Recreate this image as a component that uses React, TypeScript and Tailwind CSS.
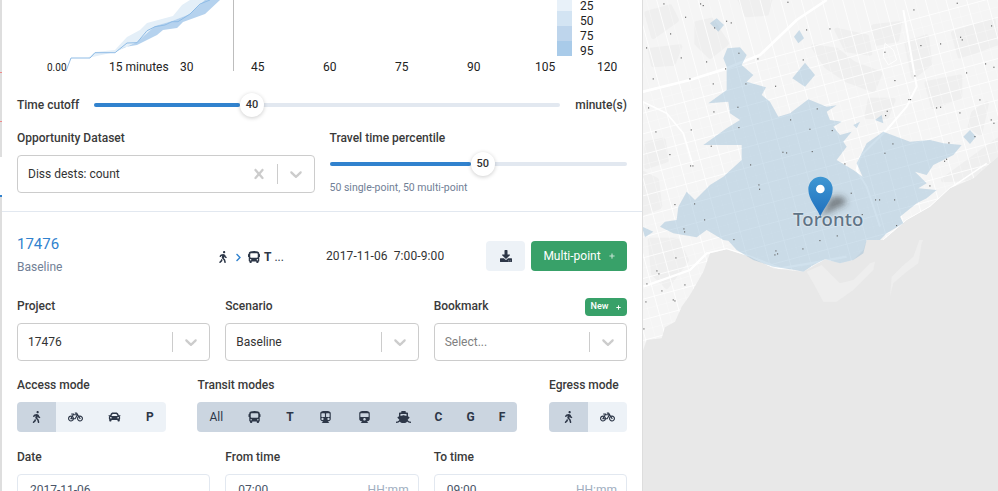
import React from 'react'
import {
  FaBicycle,
  FaBus,
  FaCar,
  FaChevronRight,
  FaDownload,
  FaPlus,
  FaShip,
  FaSubway,
  FaTrain,
  FaWalking,
} from 'react-icons/fa'

const chevronPath =
  'M4.516 7.548c0.436-0.446 1.043-0.481 1.576 0l3.908 3.747 3.908-3.747c0.533-0.481 1.141-0.446 1.574 0 0.436 0.445 0.408 1.197 0 1.615-0.406 0.418-4.695 4.502-4.695 4.502-0.217 0.223-0.502 0.335-0.787 0.335s-0.57-0.112-0.789-0.335c0 0-4.287-4.084-4.695-4.502s-0.436-1.17 0-1.615z'
const clearPath =
  'M14.348 14.849c-0.469 0.469-1.229 0.469-1.697 0l-2.651-3.030-2.651 3.029c-0.469 0.469-1.229 0.469-1.697 0-0.469-0.469-0.469-1.229 0-1.697l2.758-3.15-2.759-3.152c-0.469-0.469-0.469-1.228 0-1.697s1.228-0.469 1.697 0l2.652 3.031 2.651-3.031c0.469-0.469 1.228-0.469 1.697 0s0.469 1.229 0 1.697l-2.758 3.152 2.758 3.15c0.469 0.469 0.469 1.229 0 1.698z'

const Label: React.FC<{ children: React.ReactNode; className?: string }> = ({ children, className = '' }) => (
  <div className={`h-4 text-xs leading-4 font-medium text-[#3a3a3a] ${className}`}>{children}</div>
)

const Select: React.FC<{ value: string; placeholder?: boolean; clearable?: boolean }> = ({
  value,
  placeholder,
  clearable,
}) => (
  <div className="flex h-[38px] items-center rounded border border-[#ccc] bg-white pl-[10px]">
    <div className={`flex-1 text-xs ${placeholder ? 'text-[#808080]' : 'text-[#333]'}`}>{value}</div>
    {clearable && (
      <svg viewBox="0 0 20 20" className="mr-2 h-5 w-5 fill-[#ccc]">
        <path d={clearPath} />
      </svg>
    )}
    <div className="h-[20px] w-px bg-[#ccc]" />
    <svg viewBox="0 0 20 20" className="mx-2 h-5 w-5 fill-[#ccc]">
      <path d={chevronPath} />
    </svg>
  </div>
)

const Slider: React.FC<{ percent: string; value: number; className?: string }> = ({ percent, value, className = '' }) => (
  <div className={`relative h-6 ${className}`}>
    <div className="absolute top-[10px] h-1 w-full rounded-full bg-[#e2e8f0]" />
    <div className="absolute top-[10px] left-0 h-1 rounded-full bg-[#3182ce]" style={{ width: percent }} />
    <div
      className="absolute top-0 flex h-6 w-6 -translate-x-1/2 items-center justify-center rounded-full bg-white text-[11px] font-medium text-[#333] shadow-[0_1px_4px_rgba(0,0,0,0.2)]"
      style={{ left: `calc(${percent} + 12px)` }}
    >
      {value}
    </div>
  </div>
)

type Mode = { key: string; icon?: React.ReactNode; text?: string; bold?: boolean; active?: boolean }

const ModeGroup: React.FC<{ modes: Mode[] }> = ({ modes }) => (
  <div className="flex h-[30px] overflow-hidden rounded text-[#2d3748]">
    {modes.map((m) => (
      <div
        key={m.key}
        className={`flex items-center justify-center px-3 text-xs ${m.bold ? 'font-bold' : ''} ${
          m.active ? 'bg-[#cbd5e0]' : 'bg-[#edf2f7]'
        }`}
      >
        {m.icon ?? m.text}
      </div>
    ))}
  </div>
)

const TimeInput: React.FC<{ value: string; hint?: string }> = ({ value, hint }) => (
  <div className="flex h-[34px] items-center justify-between rounded border border-[#e2e8f0] bg-white pr-[9px] pb-[3px] pl-3 text-xs text-[#4a5568]">
    <span>{value}</span>
    {hint && <span className="text-[#a0aec0]">{hint}</span>}
  </div>
)

const Chart: React.FC = () => (
  <svg viewBox="0 0 640 73" className="block h-[73px] w-[640px]">
    <g transform="translate(-2 0)">
      <polygon
        points="88,58 95,52 115,50 127,37 140,30 147,23 173,16 182,5 190,0 215,0 190,14 172,21 155,26 137,42 115,52"
        fill="#e4eff8"
      />
      <polygon
        points="115,52 125,47 137,45 157,35 163,30 177,28 183,22 205,14 220,0 205,0 190,14 172,21 155,26 137,42"
        fill="#b5d2ee"
      />
      <polyline
        points="66,71 71,58 90,58 95,52.7 115,52.7 127,43 137,42.7 147,30.7 155,26.7 165,25 172,21.7 178,21.7 190,14 200,4 210,0"
        fill="none"
        stroke="#8fbce6"
        strokeWidth="1"
      />
    </g>
    <line x1="231.5" y1="0" x2="231.5" y2="71" stroke="#bdbdbd" strokeWidth="1" />
    <rect x="555" y="-4" width="15" height="15" fill="#e8f1f9" />
    <rect x="555" y="11" width="15" height="15" fill="#d3e4f3" />
    <rect x="555" y="26" width="15" height="15" fill="#bed5ec" />
    <rect x="555" y="41" width="15" height="15" fill="#a9cbe9" />
    <g fontSize="12" fill="#222" fontFamily="Roboto, sans-serif">
      <text x="578" y="10">25</text>
      <text x="578" y="25">50</text>
      <text x="578" y="40">75</text>
      <text x="578" y="55">95</text>
      <text x="45" y="71" fontSize="10">0.00</text>
      <text x="107" y="71">15 minutes</text>
      <text x="178" y="71">30</text>
      <text x="249" y="71">45</text>
      <text x="321" y="71">60</text>
      <text x="393" y="71">75</text>
      <text x="465" y="71">90</text>
      <text x="533" y="71">105</text>
      <text x="595" y="71">120</text>
    </g>
  </svg>
)

const land =
  '6,0 1074,0 1074,470 1050,490 1000,535 930,565 870,620 800,660 730,720 680,720 670,750 640,780 600,790 555,778 520,798 490,815 400,805 330,770 260,748 210,760 190,815 150,885 125,920 105,965 75,982 65,1015 20,1020 6,1060'

const iso =
  '250,175 262,145 300,142 320,165 305,195 340,225 320,245 378,262 365,285 390,305 415,350 450,340 505,298 560,320 590,316 560,335 570,360 605,365 580,380 600,405 635,395 610,425 620,440 590,480 640,510 668,530 650,490 680,430 730,395 810,425 870,420 910,430 965,435 940,465 880,495 860,525 825,515 860,550 835,565 890,570 860,595 830,610 780,650 790,670 740,700 720,720 680,720 670,760 640,780 600,790 555,778 520,795 490,815 465,810 400,800 340,780 290,750 265,722 250,720 200,690 170,712 100,700 60,680 75,665 110,660 115,620 140,575 165,600 210,555 250,530 305,480 305,435 190,435 260,385 300,360 270,340 265,305 205,310 260,270 260,200'

const blobs = [
  '210,70 230,55 252,75 235,95',
  '462,110 478,90 492,115 475,130',
  '457,235 495,188 525,225 495,260',
  '970,410 990,390 1008,410 990,432',
  '6,680 40,695 15,712',
  '640,375 660,365 650,385',
  '705,360 725,345 730,370',
]

const parks = [
  '170,70 215,60 260,130 210,170 170,130',
  '20,40 90,20 110,60 40,110',
  '300,0 390,0 380,40 320,45',
  '520,140 590,150 640,190 720,220 700,270 620,240 560,200',
  '590,90 680,110 690,160 620,150',
  '700,80 780,70 770,120 710,130',
  '30,150 120,140 100,190 40,195',
  '800,130 860,110 870,190 820,230',
  '860,250 960,230 960,290 880,320',
  '1000,340 1040,310 1020,400 990,380',
  '20,430 70,420 80,480 20,500',
  '10,520 50,540 60,620 10,640',
  '690,300 760,300 740,350 680,350',
  '940,100 1060,60 1070,130 960,170',
  '910,540 1074,420 1074,470 1000,535',
  '30,720 110,720 140,780 80,860 40,820',
]

const dots: [number, number][] = [
  [70, 10], [180, 10], [188, 15], [442, 5], [135, 50], [258, 62], [272, 67], [222, 82], [90, 100], [498, 88], [568, 85],
  [820, 28], [950, 8], [1053, 76], [960, 110], [965, 118], [841, 135], [900, 130], [733, 155], [295, 158], [18, 142],
  [122, 172], [198, 184], [352, 175], [488, 178], [255, 205], [38, 235], [148, 235], [218, 250], [316, 250], [405, 257],
  [823, 226], [763, 240], [978, 217], [1035, 190], [1060, 200], [805, 297], [810, 297], [740, 332], [735, 345], [1018, 298],
  [888, 322], [900, 320], [958, 337], [1052, 358], [1060, 368], [24, 322], [220, 334], [292, 320], [530, 325], [450, 358],
  [508, 386], [575, 390], [295, 381], [152, 388], [46, 394], [88, 462], [150, 496], [157, 496], [212, 437], [427, 455],
  [438, 457], [515, 453], [330, 493], [613, 490], [733, 458], [757, 430], [925, 427], [912, 482], [918, 476], [1003, 408],
  [868, 556], [355, 553], [357, 566], [632, 578], [705, 598], [717, 598], [762, 598], [103, 612], [162, 610], [192, 658],
  [130, 685], [132, 694], [768, 675], [280, 717], [538, 720], [590, 706], [665, 642], [106, 772], [49, 811], [55, 820],
  [19, 850], [133, 853], [64, 871], [16, 904], [98, 898], [103, 901], [10, 985], [406, 751], [403, 763], [411, 760], [487, 745],
]

const hGrid = Array.from({ length: 22 }, (_, i) => -20 + i * 62)
const vGrid = Array.from({ length: 22 }, (_, i) => -260 + i * 62)

const MapPane: React.FC = () => (
  <div className="relative h-full flex-1 overflow-hidden bg-[#e8e8e8]">
    <svg viewBox="9 0 1065 1473" className="block h-[491px] w-[355px]">
      <defs>
        <clipPath id="land-clip">
          <polygon points={land} />
        </clipPath>
        <filter id="pin-shadow" x="-50%" y="-50%" width="200%" height="200%">
          <feGaussianBlur stdDeviation="10" />
        </filter>
        <linearGradient id="pin-fill" x1="0" y1="0" x2="0" y2="1">
          <stop offset="0" stopColor="#3f97d3" />
          <stop offset="1" stopColor="#1f6fbd" />
        </linearGradient>
      </defs>
      <polygon
        points="500,815 545,795 580,830 600,850 640,840 690,790 705,785 700,810 640,870 590,905 550,905 520,850"
        fill="#eeeeee"
      />
      <polygon points="750,890 760,850 800,815 835,790 845,730 850,720 838,720 820,770 785,800 755,830" fill="#eeeeee" />
      <polygon points={land} fill="#f5f5f5" />
      <g clipPath="url(#land-clip)">
        <g fill="#efefef" stroke="#efefef" strokeWidth="14" strokeLinejoin="round">
          {parks.map((p) => (
            <polygon key={p} points={p} />
          ))}
        </g>
        <g stroke="#fff" strokeWidth="1.5" fill="none" opacity="0.55">
          {hGrid.map((y) => (
            <line key={y} x1="0" y1={y + 331} x2="1080" y2={y + 331 - 292} />
          ))}
          {vGrid.map((x) => (
            <line key={x} x1={x + 31} y1="0" x2={x + 431} y2="1473" />
          ))}
        </g>
        <g stroke="#fff" strokeWidth="2.4" fill="none">
          {hGrid.map((y) => (
            <line key={y} x1="0" y1={y + 300} x2="1080" y2={y + 300 - 292} />
          ))}
          {vGrid.map((x) => (
            <line key={x} x1={x} y1="0" x2={x + 400} y2="1473" />
          ))}
        </g>
        <g stroke="#fff" fill="none" strokeLinejoin="round">
          <polyline points="8,275 150,240 260,205 360,165 470,60 560,0" strokeWidth="8" />
          <polyline points="790,30 830,260 800,320 740,390 660,470 650,510 680,560 720,680" strokeWidth="6" />
          <polyline points="8,305 80,340 130,400 160,500" strokeWidth="5" />
          <polyline points="10,860 150,810 200,760 260,748 330,770 420,805 510,790 620,770" strokeWidth="7" />
          <polyline points="730,720 800,660 870,620 930,565 1040,490" strokeWidth="4" />
          <polyline points="735,130 760,150 770,180 745,195 730,170 735,130" strokeWidth="3" />
        </g>
      </g>
      <g fill="#8ab4d2" fillOpacity="0.4">
        <polygon points={iso} />
        {blobs.map((b) => (
          <polygon key={b} points={b} />
        ))}
      </g>
      <g fill="#666">
        {dots.map(([x, y]) => (
          <rect key={`${x}-${y}`} x={x} y={y} width="3.5" height="3.5" />
        ))}
      </g>
      <polygon points="541,650 575,590 610,590 620,610" fill="#333" fillOpacity="0.55" filter="url(#pin-shadow)" />
      <path
        d="M541 650 C530 620 505 600 505 567 A36 36 0 0 1 578 567 C578 600 552 620 541 650 Z"
        fill="url(#pin-fill)"
      />
      <circle cx="541" cy="567" r="13" fill="#fff" />
    </svg>
    <span className="absolute top-[205px] left-[150px] font-['Noto_Sans',sans-serif] text-[18.5px] leading-7 font-medium tracking-[0.2px] text-[#5f7486] [text-shadow:0_0_2px_#fff]">
      Toronto
    </span>
  </div>
)

const iconClass = 'h-3 w-[15px]'

const App: React.FC = () => (
  <div className="flex h-[491px] w-[998px] overflow-hidden bg-white font-['Roboto',sans-serif]">
    <div className="flex w-[2px] flex-col bg-[#dedede]">
      <div className="mt-[72px] h-px bg-[#f08a8a]" />
      <div className="mt-[48px] h-px bg-[#f08a8a]" />
      <div className="mt-[35px] h-[38px] bg-white" />
      <div className="h-[2px] bg-[#3182ce]" />
    </div>
    <div className="w-[641px] shrink-0 border-r border-[#ddd]">
      <Chart />
      <div className="mt-5 flex h-6 items-center pr-[15px] pl-[15px] text-xs text-[#3a3a3a]">
        <div className="w-[77px] font-medium">Time cutoff</div>
        <Slider percent="31.33%" value={40} className="flex-1" />
        <div className="ml-[15px] font-medium">minute(s)</div>
      </div>
      <div className="mt-[13px] grid grid-cols-2 gap-x-[15px] border-b border-[#e2e8f0] px-[15px] pb-[18px]">
        <div>
          <Label className="mb-[9px]">Opportunity Dataset</Label>
          <Select value="Diss dests: count" clearable />
        </div>
        <div className="h-[63px]">
          <Label className="mb-[6px]">Travel time percentile</Label>
          <Slider percent="47.5%" value={50} />
          <div className="mt-[4px] text-[10.5px] leading-4 text-[#718096]">50 single-point, 50 multi-point</div>
        </div>
      </div>
      <div className="px-[15px] pt-[22px]">
        <div className="flex h-10 items-start">
          <div className="w-[199px]">
            <div className="text-[15px] leading-5 text-[#3182ce]">17476</div>
            <div className="mt-[5px] text-xs leading-4 text-[#718096]">Baseline</div>
          </div>
          <div className="mt-[15px] flex w-[110px] items-center text-xs text-[#2d3748]">
            <FaWalking className="ml-[1px] text-xs" />
            <FaChevronRight className="ml-[5px] text-[9px] text-[#3182ce]" />
            <FaBus className="ml-[5px] text-xs" />
            <span className="ml-[4px] font-bold">T</span>
            <span className="ml-[3px]">...</span>
          </div>
          <div className="mt-[14px] w-[160px] text-xs tracking-[0.1px] whitespace-pre text-[#333]">2017-11-06  7:00-9:00</div>
          <div className="mt-[7px] flex gap-[6px]">
            <div className="flex h-[30px] w-[39px] items-center justify-center rounded bg-[#edf2f7] text-[#2d3748]">
              <FaDownload className="text-xs" />
            </div>
            <div className="flex h-[30px] w-[96px] items-center justify-center gap-2 rounded bg-[#38a169] text-xs text-white">
              Multi-point
              <FaPlus className="text-[6px] opacity-70" />
            </div>
          </div>
        </div>
        <div className="mt-6 grid grid-cols-3 gap-x-[15px]">
          <div>
            <Label className="mb-[9px]">Project</Label>
            <Select value="17476" />
          </div>
          <div>
            <Label className="mb-[9px]">Scenario</Label>
            <Select value="Baseline" />
          </div>
          <div>
            <div className="mb-[7px] flex h-[18px] items-start justify-between">
              <Label>Bookmark</Label>
              <div className="flex h-[18px] w-[42px] items-center justify-center gap-2 rounded bg-[#38a169] text-[9px] font-medium text-white">
                New
                <FaPlus className="text-[5px]" />
              </div>
            </div>
            <Select value="Select..." placeholder />
          </div>
        </div>
        <div className="mt-4 flex justify-between">
          <div>
            <Label className="mb-[9px]">Access mode</Label>
            <ModeGroup
              modes={[
                { key: 'walk', icon: <FaWalking className={iconClass} />, active: true },
                { key: 'bike', icon: <FaBicycle className={iconClass} /> },
                { key: 'car', icon: <FaCar className={iconClass} /> },
                { key: 'park', text: 'P', bold: true },
              ]}
            />
          </div>
          <div>
            <Label className="mb-[9px]">Transit modes</Label>
            <ModeGroup
              modes={[
                { key: 'all', text: 'All', active: true },
                { key: 'bus', icon: <FaBus className={iconClass} />, active: true },
                { key: 'tram', text: 'T', bold: true, active: true },
                { key: 'subway', icon: <FaSubway className={iconClass} />, active: true },
                { key: 'rail', icon: <FaTrain className={iconClass} />, active: true },
                { key: 'ferry', icon: <FaShip className={iconClass} />, active: true },
                { key: 'cable', text: 'C', bold: true, active: true },
                { key: 'gondola', text: 'G', bold: true, active: true },
                { key: 'funicular', text: 'F', bold: true, active: true },
              ]}
            />
          </div>
          <div>
            <Label className="mb-[9px]">Egress mode</Label>
            <ModeGroup
              modes={[
                { key: 'walk', icon: <FaWalking className={iconClass} />, active: true },
                { key: 'bike', icon: <FaBicycle className={iconClass} /> },
              ]}
            />
          </div>
        </div>
        <div className="mt-[17px] grid grid-cols-3 gap-x-[15px]">
          <div>
            <Label className="mb-[9px]">Date</Label>
            <TimeInput value="2017-11-06" />
          </div>
          <div>
            <Label className="mb-[9px]">From time</Label>
            <TimeInput value="07:00" hint="HH:mm" />
          </div>
          <div>
            <Label className="mb-[9px]">To time</Label>
            <TimeInput value="09:00" hint="HH:mm" />
          </div>
        </div>
      </div>
    </div>
    <MapPane />
  </div>
)

export default App
